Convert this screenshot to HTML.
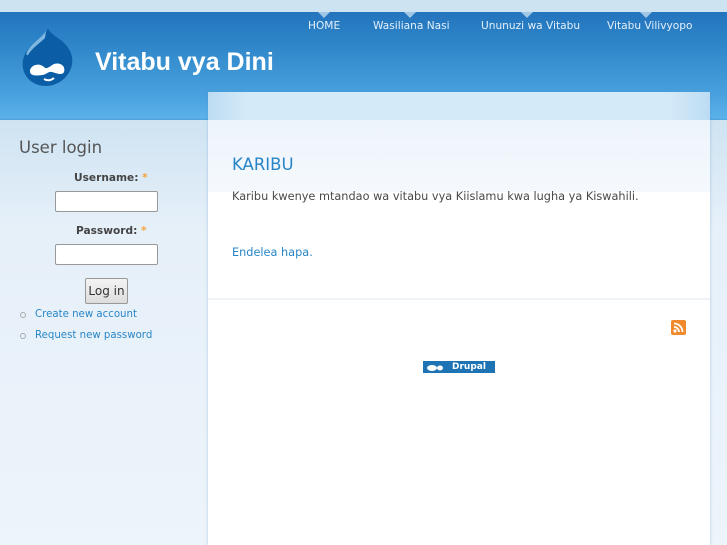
<!DOCTYPE html>
<html style="background:#edf4fa"><head><meta charset="utf-8"><style>
*{margin:0;padding:0;box-sizing:border-box}
body{width:727px;height:545px;overflow:hidden;font-family:"DejaVu Sans","Liberation Sans",sans-serif;background:linear-gradient(#cfe3f2 120px,#e6f0f9 230px,#edf4fa 545px);position:relative}
#top{position:absolute;left:0;top:0;width:727px;height:12px;background:#cde3f1}
#hdr{position:absolute;left:0;top:12px;width:727px;height:108px;background:linear-gradient(#2474bd,#2d85c8 30px,#4aa2df 85px,#5bb2ea 106px,#4d9fdc 108px)}
#logo{position:absolute;left:20px;top:26px}
#site{position:absolute;left:95px;top:48px;color:#fff;font:bold 25px "Liberation Sans",sans-serif}
.nav{position:absolute;top:20px;color:#e4f0fa;font-size:10.6px}
.tri{position:absolute;top:12px;width:0;height:0;border-left:6px solid transparent;border-right:6px solid transparent;border-top:6px solid #9fc7e6}
#box{position:absolute;left:208px;top:92px;width:502px;height:453px;background:#fff;box-shadow:0 0 3px rgba(80,140,200,.4)}
#band{position:absolute;left:0;top:0;width:502px;height:28px;background:linear-gradient(90deg,#bcdcf3,#d5eaf8 40px,#d5eaf8 460px,#bcdcf3)}
#grad{position:absolute;left:0;top:28px;width:502px;height:72px;background:linear-gradient(#edf4fb,#f5f9fd)}
#sep{position:absolute;left:0;top:206px;width:502px;height:2px;background:#eef3f7}
h2{position:absolute;left:24px;top:63px;font:normal 16.5px "DejaVu Sans",sans-serif;color:#2785c7}
.p{position:absolute;left:24px;font-size:11.3px;color:#494949}
a,.lnk{color:#2786c6;text-decoration:none}
#ul{position:absolute;left:19px;top:138px;font-size:16.5px;color:#555}
.lab{position:absolute;font-size:10.6px;font-weight:bold;color:#444}
.lab span{color:#f7a23c}
.inp{position:absolute;left:55px;width:103px;height:21px;background:#fff;border:1px solid #999;border-radius:2px}
#btn{position:absolute;left:85px;top:278px;width:43px;height:26px;border:1px solid #999;border-radius:2px;background:linear-gradient(#f4f4f4,#ddd);font-size:12px;color:#333;text-align:center;line-height:24px}
.li{position:absolute;left:35px;font-size:10.2px}
.bul{position:absolute;left:20px;width:6px;height:6px;border:1px solid #aaa;border-radius:50%}
</style></head><body>
<div id="top"></div>
<div id="hdr"></div>
<svg id="logo" width="55" height="62" viewBox="0 0 55 62"><path d="M28 2C26 10 16 14 9 22C2 30 1 40 5 48C10 58 22 62 33 59C46 55 54 43 52 31C50 20 41 14 35 10C31 7 29 5 28 2Z" fill="#0b5ea6"/><path d="M26 5C22 12 13 16 8 24C6 27 6 30 8 29C12 22 20 17 25 12Z" fill="#9dcdf0" opacity=".8"/><path d="M10 44C12 38 20 37 24 41C27 44 30 40 34 38C40 36 46 40 44 46C42 50 36 47 32 46C28 45 26 49 22 49C16 50 9 50 10 44Z" fill="#fff"/><path d="M24 53Q29 56 34 52" stroke="#fff" stroke-width="2" fill="none"/></svg>
<div id="site">Vitabu vya Dini</div>
<div class="tri" style="left:318px"></div><div class="nav" style="left:308px">HOME</div>
<div class="tri" style="left:404px"></div><div class="nav" style="left:373px">Wasiliana Nasi</div>
<div class="tri" style="left:521px"></div><div class="nav" style="left:481px">Ununuzi wa Vitabu</div>
<div class="tri" style="left:640px"></div><div class="nav" style="left:607px">Vitabu Vilivyopo</div>
<div id="box"><div id="band"></div><div id="grad"></div><div id="sep"></div>
<h2>KARIBU</h2>
<div class="p" style="top:98px">Karibu kwenye mtandao wa vitabu vya Kiislamu kwa lugha ya Kiswahili.</div>
<div class="p lnk" style="top:154px">Endelea hapa.</div>
<svg style="position:absolute;left:463px;top:228px" width="15" height="15"><rect width="15" height="15" rx="2" fill="#f08a2c"/><circle cx="4" cy="11" r="1.6" fill="#fff"/><path d="M3 7A5 5 0 0 1 8 12M3 3.5A8.5 8.5 0 0 1 11.5 12" stroke="#fff" stroke-width="1.8" fill="none"/></svg>
<div style="position:absolute;left:215px;top:269px;width:72px;height:12px;background:#1e73b5"><span style="position:absolute;left:29px;top:0;color:#fff;font:bold 9px/12px 'DejaVu Sans',sans-serif">Drupal</span><svg style="position:absolute;left:3px;top:2px" width="18" height="9"><ellipse cx="6" cy="5" rx="5" ry="3" fill="#fff"/><ellipse cx="14" cy="5" rx="3" ry="2.5" fill="#fff"/></svg></div>
</div>
<div id="ul">User login</div>
<div class="lab" style="left:74px;top:172px">Username: <span>*</span></div>
<div class="inp" style="top:191px"></div>
<div class="lab" style="left:76px;top:225px">Password: <span>*</span></div>
<div class="inp" style="top:244px"></div>
<div id="btn">Log in</div>
<div class="bul" style="top:312px"></div><div class="li lnk" style="top:309px">Create new account</div>
<div class="bul" style="top:333px"></div><div class="li lnk" style="top:330px">Request new password</div>
</body></html>
